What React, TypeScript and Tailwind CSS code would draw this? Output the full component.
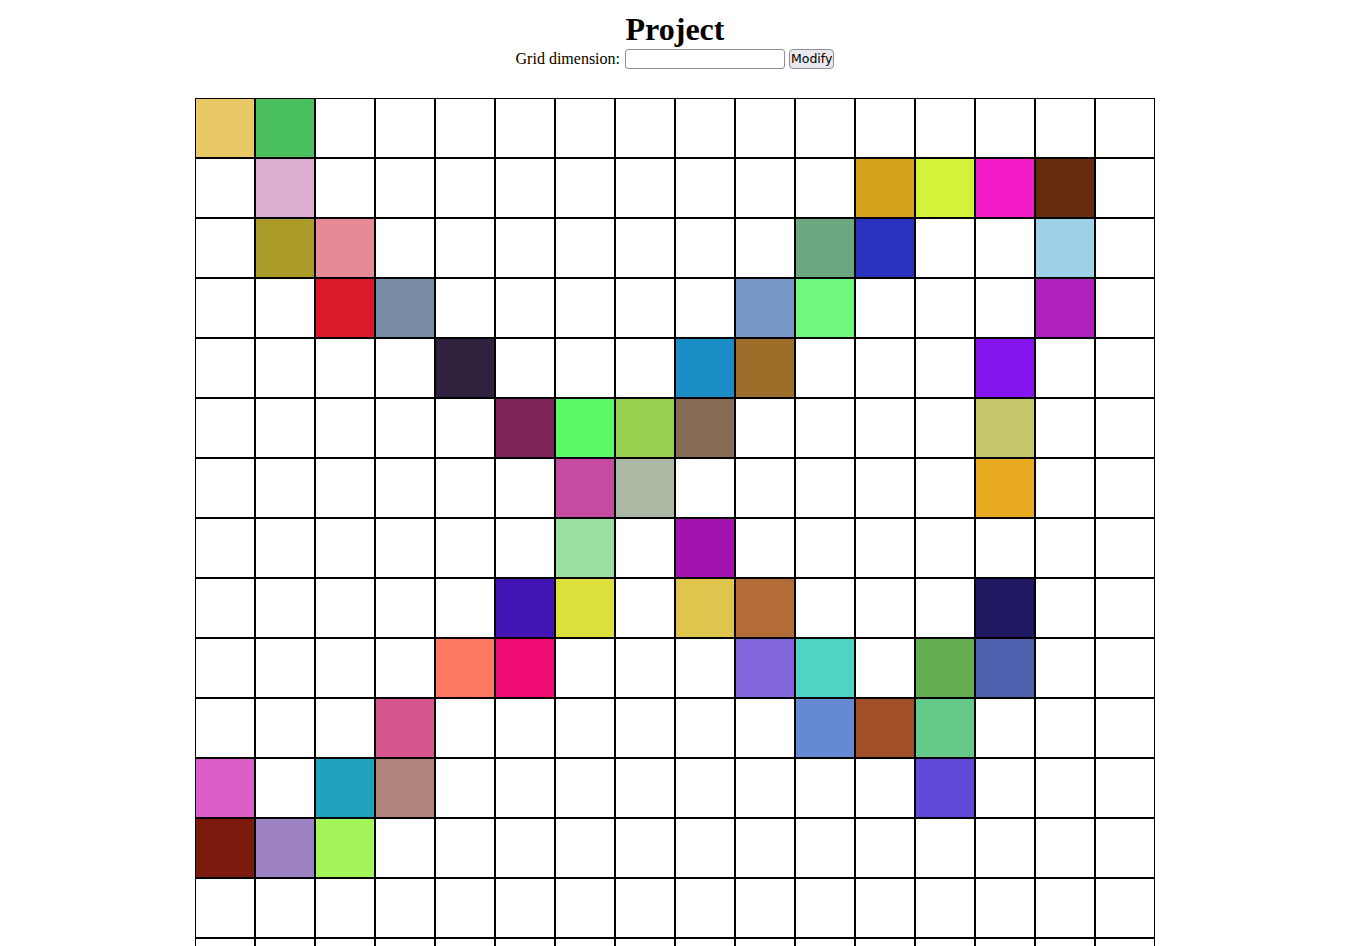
import React from "react"

// Grid size and painted cells (row-col -> colour)
const SIZE = 16

const painted: Record<string, string> = {
  "0-0": "#e9c866",
  "0-1": "#4abf5e",
  "1-1": "#ddadd0",
  "1-11": "#d4a31c",
  "1-12": "#d2f33a",
  "1-13": "#f31bc8",
  "1-14": "#662a0f",
  "2-1": "#ab9c29",
  "2-2": "#e68b95",
  "2-10": "#6da780",
  "2-11": "#2a32c0",
  "2-14": "#9dd1e7",
  "3-2": "#da1a2a",
  "3-3": "#7a8ba5",
  "3-9": "#7598c7",
  "3-10": "#6ff97c",
  "3-14": "#ae21bd",
  "4-4": "#30223e",
  "4-8": "#1b8dc6",
  "4-9": "#9d6e2a",
  "4-13": "#8615f0",
  "5-5": "#7d2359",
  "5-6": "#5bf966",
  "5-7": "#99cf4f",
  "5-8": "#876c55",
  "5-13": "#c4c76b",
  "6-6": "#c44ba0",
  "6-7": "#abb8a4",
  "6-13": "#e8aa20",
  "7-6": "#98dfa0",
  "7-8": "#a314ae",
  "8-5": "#4114b3",
  "8-6": "#dde03c",
  "8-8": "#dfc44e",
  "8-9": "#b36b38",
  "8-13": "#211862",
  "9-4": "#fe7962",
  "9-5": "#ef0b72",
  "9-9": "#8267dc",
  "9-10": "#4ed4c2",
  "9-12": "#64ad50",
  "9-13": "#4f61ae",
  "10-3": "#d5558d",
  "10-10": "#6689d3",
  "10-11": "#a1502a",
  "10-12": "#64c989",
  "11-0": "#dd5dc8",
  "11-2": "#20a2bc",
  "11-3": "#b0837c",
  "11-12": "#6149d9",
  "12-0": "#7b1b0e",
  "12-1": "#9d83c2",
  "12-2": "#a4f55b",
}

export default function App() {
  const cells = []
  for (let r = 0; r < SIZE; r++) {
    for (let c = 0; c < SIZE; c++) {
      const color = painted[`${r}-${c}`]
      cells.push(
        <div
          key={`${r}-${c}`}
          className="w-[60px] h-[60px] border border-black box-border bg-white"
          style={color ? { backgroundColor: color } : undefined}
        />
      )
    }
  }

  return (
    <div className="bg-white text-black font-['Liberation_Serif','Times_New_Roman',serif]">
      <h1 className="pt-[11px] text-[32px] leading-[37px] font-bold text-center">Project</h1>

      <div className="flex items-center justify-center h-[21px] text-[16px]">
        <label className="leading-[20px]">Grid dimension:</label>
        <input
          type="text"
          className="ml-[5px] w-[160px] h-[20px] border border-[#8f8f9d] rounded-[3px] bg-white outline-none px-[2px] text-[13px]"
        />
        <button
          type="button"
          className="ml-[4px] h-[20px] px-[1px] border border-[#8f8f9d] rounded-[4px] bg-[#e9e9ed] text-[12.5px] leading-[16px] font-['DejaVu_Sans',sans-serif] text-black"
        >
          Modify
        </button>
      </div>

      {/* Board */}
      <div className="w-[960px] mx-auto mt-[29px] flex flex-wrap">{cells}</div>
    </div>
  )
}
